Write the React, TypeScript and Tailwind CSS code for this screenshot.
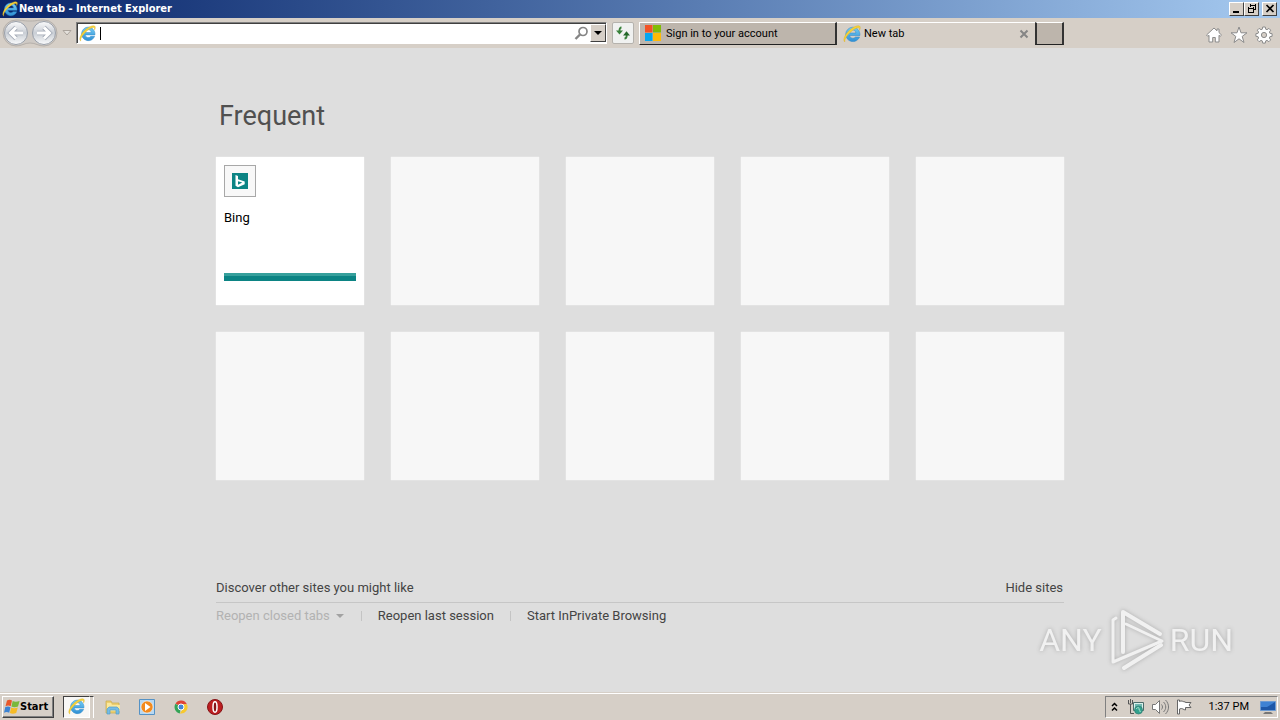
import { useState } from 'react';
import type { ReactNode } from 'react';

const bevel =
  'border border-t-white border-l-white border-r-[#404040] border-b-[#404040]';

function IeIcon({ className }: { className: string }) {
  return (
    <svg viewBox="0 0 18 18" className={className} aria-hidden="true">
      <defs>
        <linearGradient id="ie-blue" x1="0" y1="0" x2="0" y2="1">
          <stop offset="0" stopColor="#74cdf5" />
          <stop offset="1" stopColor="#2f8fd4" />
        </linearGradient>
      </defs>
      <path
        d="M9.600 2.200a7.200 7.200 0 1 0 7 9.800h-4.100a3.400 3.400 0 0 1-6-1.500h10.400c.4-4.700-3-8.300-7.300-8.300ZM6.500 8a3.200 3.200 0 0 1 6.400 0Z"
        fill="url(#ie-blue)"
        stroke="#2a86c8"
        strokeWidth=".5"
      />
      <path
        d="M2 17C-.9 15.500 2.100 9 7 4.800 11.500 1 16.300-.3 17.100 1.800c.4 1 0 2.300-.6 3.400.2-1.800-.2-2.500-1.300-2.500-2 0-5.400 2.100-8.300 5C3.100 11.300 1 15.500 2 17Z"
        fill="#f5d33a"
        stroke="#dcae20"
        strokeWidth=".4"
      />
    </svg>
  );
}

function WindowsFlag({ className }: { className: string }) {
  return (
    <svg viewBox="0 0 16 16" className={className} aria-hidden="true">
      <path d="M3 1.500C5 .4 6.600.700 8 1.600L6.700 7.300C5.200 6.400 3.500 6.300 1.500 7.200Z" fill="#e8582a" />
      <path d="M8.700 2c1.800.9 4 1 6.900 0l-1.600 5.600c-2.400.9-4.700.9-6.600 0Z" fill="#79b83b" />
      <path d="M1.300 8.100c2-.9 3.700-.8 5.200.1l-1.300 5.600c-1.500-.9-3.300-1-5.200-.1Z" fill="#3c83d3" />
      <path d="M7.200 8.500c1.900.9 4.200.9 6.600 0l-1.600 5.600c-2.300.9-4.500.9-6.300 0Z" fill="#f6bb26" />
    </svg>
  );
}

function CaptionButton({ label, children }: { label: string; children: ReactNode }) {
  return (
    <button aria-label={label} className={`flex h-[14px] w-[15px] items-center justify-center bg-[#d6cfc7] ${bevel}`}>
      <svg viewBox="0 0 12 12" className="size-3" fill="none" stroke="#000" shapeRendering="crispEdges" aria-hidden="true">
        {children}
      </svg>
    </button>
  );
}

function TitleBar() {
  return (
    <header className="flex h-[18px] items-center bg-linear-to-r from-[#0a246a] to-[#a6caf0] pr-[3px] pl-[2px]">
      <IeIcon className="size-4" />
      <h1 className="ml-px flex-1 font-[DejaVu_Sans_Condensed,sans-serif] text-[11px] leading-4 font-bold text-white">
        New tab - Internet Explorer
      </h1>
      <CaptionButton label="Minimize">
        <path d="M2 9h6" strokeWidth="2" />
      </CaptionButton>
      <CaptionButton label="Restore">
        <path d="M4 2h6M4.500 1v3M9.500 1v6M8 6.500h2M2 5h6M2.500 4v6M7.500 4v6M2 9.500h6" />
      </CaptionButton>
      <span className="w-[3px]" />
      <CaptionButton label="Close">
        <path d="m2.500 2 7 7m0-7-7 7" strokeWidth="1.700" shapeRendering="auto" />
      </CaptionButton>
    </header>
  );
}

function NavButtons() {
  return (
    <div className="flex items-center">
      <svg viewBox="0 0 56 28" className="h-7 w-14" aria-hidden="true">
        <defs>
          <linearGradient id="nav-fill" x1="0" y1="0" x2="0" y2="1">
            <stop offset="0" stopColor="#fbfbfc" />
            <stop offset=".5" stopColor="#c9ced5" />
            <stop offset="1" stopColor="#fafbfc" />
          </linearGradient>
        </defs>
        <path d="M14 1c6 0 7 1 14 1s8-1 14-1a13 13 0 0 1 0 26c-6 0-8-3-14-3s-8 3-14 3a13 13 0 0 1 0-26Z" fill="#cfcac5" stroke="#b5b0ab" />
        <circle cx="14" cy="14" r="11.500" fill="url(#nav-fill)" stroke="#9aa0aa" />
        <circle cx="42" cy="14" r="11.500" fill="url(#nav-fill)" stroke="#9aa0aa" />
        <path d="M21 14H8.500m5.500-5.500L8.500 14l5.500 5.500" fill="none" stroke="#a4abb7" strokeWidth="4.600" />
        <path d="M21 14H8.500m5.500-5.500L8.500 14l5.500 5.500" fill="none" stroke="#fff" strokeWidth="3" />
        <path d="M35 14h12.500M42 8.500l5.500 5.500-5.500 5.500" fill="none" stroke="#a4abb7" strokeWidth="4.600" />
        <path d="M35 14h12.500M42 8.500l5.500 5.500-5.500 5.500" fill="none" stroke="#fff" strokeWidth="3" />
      </svg>
      <button aria-label="Recent pages" className="flex w-[18px] justify-center">
        <svg viewBox="0 0 10 6" className="h-[6px] w-[10px]" aria-hidden="true">
          <path d="M1 .5h8L5 5Z" fill="#e5e1dc" stroke="#aaa39c" />
        </svg>
      </button>
    </div>
  );
}

function Toolbar() {
  const [address, setAddress] = useState('');
  return (
    <nav className="flex h-[30px] items-center bg-[#d6cfc7] pr-[7px] pl-[2px]">
      <NavButtons />
      <div className="flex h-[22px] min-w-0 flex-1 items-center border border-t-[#808080] border-r-white border-b-white border-l-[#808080] bg-white shadow-[inset_1px_1px_0_#404040]">
        <IeIcon className="ml-[2px] size-[17px] shrink-0" />
        <span className="ml-1 h-[13px] w-px bg-black" />
        <input
          aria-label="Address"
          value={address}
          onChange={(e) => setAddress(e.target.value)}
          className="min-w-0 flex-1 bg-transparent text-[11px] outline-none"
        />
        <button aria-label="Search" className="mr-px">
          <svg viewBox="0 0 16 16" className="size-4" fill="none" stroke="#858585" aria-hidden="true">
            <circle cx="10" cy="6.500" r="4" strokeWidth="1.700" />
            <path d="m7 9.500-4.500 4.500" strokeWidth="2.400" />
          </svg>
        </button>
        <button aria-label="Show address history" className={`flex h-[18px] w-4 items-center justify-center bg-[#d6cfc7] ${bevel}`}>
          <svg viewBox="0 0 8 4" className="h-1 w-2" aria-hidden="true">
            <path d="M0 0h8L4 4Z" />
          </svg>
        </button>
      </div>
      <button aria-label="Refresh" className="mx-[5px] flex size-[22px] items-center justify-center rounded-xs border border-[#b5b2ad] bg-[#f0f1f0]">
        <svg viewBox="0 0 16 16" className="size-4" fill="none" stroke="#38813a" strokeWidth="1.800" aria-hidden="true">
          <path d="M6.500 2.500C5 2.500 4.500 4 4.500 5.500V7" />
          <path d="M1 5.500h7L4.500 9.500Z" fill="#38813a" stroke="none" />
          <path d="M9.500 13.500c1.700 0 2.200-1.500 2.200-3V9" />
          <path d="M8 10.500h7l-3.500-4.200Z" fill="#25672a" stroke="none" />
        </svg>
      </button>
      <button className="flex h-[23px] w-[198px] items-center border-t border-r-2 border-b border-l border-t-white border-r-[#333] border-b-[#222] border-l-white bg-[#bdb5ac] pl-[5px] text-[11px]">
        <svg viewBox="0 0 16 16" className="mr-[5px] size-4" aria-hidden="true">
          <path d="M0 0h7.500v7.500H0Z" fill="#f35325" />
          <path d="M8 0h8v7.500H8Z" fill="#81bc06" />
          <path d="M0 8h7.500v8H0Z" fill="#05a6f0" />
          <path d="M8 8h8v8H8Z" fill="#ffba08" />
        </svg>
        <span className="pt-[2px]">Sign in to your account</span>
      </button>
      <div className="flex h-[23px] w-[198px] items-center border-t border-t-white pr-[6px] pl-[6px] text-[11px]">
        <button className="flex flex-1 items-center">
          <IeIcon className="mr-[3px] size-[18px]" />
          <span className="pt-[2px]">New tab</span>
        </button>
        <button aria-label="Close tab">
          <svg viewBox="0 0 10 10" className="size-[10px]" stroke="#858585" strokeWidth="2" aria-hidden="true">
            <path d="m1.500 1.500 7 7m0-7-7 7" />
          </svg>
        </button>
      </div>
      <button aria-label="New tab" className="h-[23px] w-[29px] border-x-2 border-t border-b border-x-[#333] border-t-white border-b-[#222] bg-[#bdb5ac]" />
      <div className="ml-[141px] flex items-center gap-[7px] pt-[3px]">
        <button aria-label="Home">
          <svg viewBox="0 0 18 18" className="size-[18px]" fill="#fff" stroke="#8b8b8b" aria-hidden="true">
            <path d="M9 2 1.500 9l1.300 1.300 1.200-1V16h3.700v-4.500h2.600V16H14V9.300l1.200 1L16.500 9 14 6.600V3h-2v1.800Z" />
          </svg>
        </button>
        <button aria-label="Favorites">
          <svg viewBox="0 0 18 18" className="size-[18px]" fill="#fff" stroke="#8b8b8b" aria-hidden="true">
            <path d="m9 1 2 5.800h6l-4.800 3.600L14 16.500l-5-3.700-5 3.700 1.800-6.100L1 6.800h6Z" />
          </svg>
        </button>
        <button aria-label="Tools">
          <svg viewBox="0 0 18 18" className="size-[18px]" fill="#fff" stroke="#8b8b8b" aria-hidden="true">
            <path d="M7.700 1h2.600l.4 2.200 1.300.5 1.900-1.300 1.800 1.800L14.400 6l.5 1.300 2.200.4v2.600l-2.200.4-.5 1.300 1.300 1.900-1.800 1.800-1.900-1.300-1.300.5-.4 2.200H7.700l-.4-2.200-1.300-.5-1.900 1.300-1.800-1.800L3.600 12l-.5-1.300-2.200-.4V7.700l2.200-.4L3.600 6 2.300 4.200l1.800-1.800L6 3.700l1.300-.5Z" />
            <circle cx="9" cy="9" r="2.600" fill="#d6cfc7" />
          </svg>
        </button>
      </div>
    </nav>
  );
}

function BingTile() {
  return (
    <a href="#bing" className="flex h-[148px] flex-col bg-white p-2 text-black shadow-[0_0_1px_#fff]">
      <span className="flex size-8 items-center justify-center border border-[#a8a8a8] bg-[#f8f8f8]">
        <svg viewBox="0 0 16 16" className="size-4" aria-hidden="true">
          <path d="M0 0h16v16H0Z" fill="#0c8484" />
          <path d="m3.500 2 2.500.9v3.300l6.700 2.200v2.800L6 14.200l-2.500-1.500Z" fill="#fff" />
          <path d="m6 8.200 4.300 1.400L6 11.800Z" fill="#0c8484" />
        </svg>
      </span>
      <span className="mt-3 text-[13px] leading-[18px]">Bing</span>
      <span className="mt-[46px] h-2 border-t-[3px] border-[#36a09c] bg-[#0c8484]" />
    </a>
  );
}

function Watermark() {
  return (
    <div className="absolute right-[47px] bottom-[20px] flex items-center gap-[5px] text-[32px] leading-[64px] text-[#f1f1f1] drop-shadow-[0_0_2px_#aaa]">
      <span>ANY</span>
      <svg viewBox="0 0 58 64" className="h-16 w-[58px]" fill="none" stroke="#f1f1f1" strokeLinejoin="round" strokeLinecap="round" aria-hidden="true">
        <path d="M16 44V4l37 22" strokeWidth="4" />
        <path d="M9 10 6 12v42l49-21-36-17" strokeWidth="3" />
        <path d="m17 60 37-23" strokeWidth="4" />
      </svg>
      <span>RUN</span>
    </div>
  );
}

function NewTabPage() {
  return (
    <main className="relative flex-1 bg-[#dedede] px-6 pt-12 text-[13px] leading-[18px] text-[#444]">
      <div className="mx-auto max-w-[848px]">
        <h2 className="pl-[3px] text-[27px] leading-10 text-[#505050]">Frequent</h2>
        <section aria-label="Frequent sites" className="mt-[21px] grid grid-cols-5 gap-[27px]">
          <BingTile />
          {Array.from({ length: 9 }, (_, i) => (
            <div key={i} className="h-[148px] bg-[#f7f7f7] shadow-[0_0_1px_#fff]" />
          ))}
        </section>
        <div className="mt-[99px] flex justify-between border-b border-[#c6c6c6] pb-[5px]">
          <a href="#discover">Discover other sites you might like</a>
          <a href="#hide" className="pr-px">Hide sites</a>
        </div>
        <div className="mt-1 flex items-center">
          <button disabled className="flex items-center gap-[6px] text-[#b2b2b2]">
            Reopen closed tabs
            <svg viewBox="0 0 8 4" className="h-1 w-2" fill="#a2a2a2" aria-hidden="true">
              <path d="M0 0h8L4 4Z" />
            </svg>
          </button>
          <span className="mr-4 ml-[17px] h-[10px] w-px bg-[#c4c4c4]" />
          <a href="#last-session">Reopen last session</a>
          <span className="mx-4 h-[10px] w-px bg-[#c4c4c4]" />
          <a href="#inprivate">Start InPrivate Browsing</a>
        </div>
      </div>
      <Watermark />
    </main>
  );
}

function Taskbar() {
  return (
    <footer className="flex h-7 items-center border-t border-[#d6cfc7] bg-[#d6cfc7] pr-[2px] pl-[2px] text-[11px] shadow-[inset_0_1px_0_#fff]">
      <button className={`flex h-[22px] w-[52px] items-center bg-[#d6cfc7] pl-px font-[DejaVu_Sans_Condensed,sans-serif] font-bold shadow-[inset_-1px_-1px_0_#808080] ${bevel}`}>
        <WindowsFlag className="size-4" />
        <span className="pt-[2px]">Start</span>
      </button>
      <div className="ml-[9px] flex items-center">
        <button aria-label="Internet Explorer" className="flex h-[22px] w-[27px] items-center justify-center border border-t-[#404040] border-r-white border-b-white border-l-[#404040] bg-[#f8f7f5]">
          <IeIcon className="size-[17px]" />
        </button>
        <span className="h-[22px] w-1 border-t border-r border-t-[#404040] border-r-white bg-[#d6cfc7]" />
        <button aria-label="Windows Explorer" className="ml-[10px]">
          <svg viewBox="0 0 18 18" className="size-[18px]" aria-hidden="true">
            <path d="M2 3h5l1 2h7v10H2Z" fill="#edcf70" stroke="#c8a94b" strokeWidth=".7" />
            <path d="M3 5h4l1 2h8v6H3Z" fill="#fae89d" />
            <path d="M3 16v-5l2-2h8l2 2v5h-3v-4H6v4Z" fill="#75bce5" stroke="#529dca" strokeWidth=".7" />
          </svg>
        </button>
        <button aria-label="Windows Media Player" className="ml-4">
          <svg viewBox="0 0 18 18" className="size-[18px]" aria-hidden="true">
            <path d="M1.500 1.500h15v15h-15Z" fill="#b7d8f2" stroke="#5592c5" />
            <circle cx="9" cy="9" r="6" fill="#f28a1e" stroke="#fff" strokeWidth=".5" />
            <path d="m7 5 5.500 4L7 13Z" fill="#fff" />
          </svg>
        </button>
        <button aria-label="Chrome" className="ml-4">
          <svg viewBox="0 0 18 18" className="size-[18px]" aria-hidden="true">
            <path d="M9 9 3.500 5.500A6.500 6.500 0 0 1 14.900 6.200H9Z" fill="#df4335" />
            <path d="M3.400 5.700 9 9l-1.200 6.400A6.500 6.500 0 0 1 3.400 5.700Z" fill="#34a457" />
            <path d="M9 6.200h5.900A6.500 6.500 0 0 1 7.800 15.400L11.500 10Z" fill="#f7c92e" />
            <circle cx="9" cy="9" r="3" fill="#4285d5" stroke="#fff" />
          </svg>
        </button>
        <button aria-label="Opera" className="ml-4">
          <svg viewBox="0 0 18 18" className="size-[18px]" aria-hidden="true">
            <circle cx="9" cy="9" r="7.500" fill="#bd1e20" stroke="#861316" />
            <ellipse cx="9" cy="9" rx="2" ry="5.200" fill="#861316" stroke="#fff" strokeWidth="1.500" />
          </svg>
        </button>
      </div>
      <div className="ml-auto flex h-[22px] items-center border border-t-[#808080] border-r-white border-b-white border-l-[#808080] pl-[5px]">
        <button aria-label="Show hidden icons">
          <svg viewBox="0 0 7 10" className="h-[10px] w-[7px]" fill="none" stroke="#000" strokeWidth="1.500" aria-hidden="true">
            <path d="m1 4 2.500-2.500L6 4M1 8.500 3.500 6 6 8.500" />
          </svg>
        </button>
        <svg viewBox="0 0 18 18" className="ml-[9px] size-[18px]" aria-hidden="true">
          <path d="M6.500 4.500h10v8h-10Z" fill="#daf0eb" stroke="#4c6c6a" />
          <path d="M8 6h7v5H8Z" fill="#70b8b0" />
          <circle cx="11.500" cy="12" r="4" fill="#31a28e" stroke="#337b71" strokeWidth=".7" />
          <path d="M9 11c2-2 3-2 3 0s2 1 1 3" stroke="#b8e4d5" fill="none" />
          <path d="M1.500 2v4h4V2M3.500 1v4m0 1v9.500H7" stroke="#555" fill="none" />
        </svg>
        <svg viewBox="0 0 18 18" className="ml-[6px] size-[18px]" fill="none" stroke="#777" aria-hidden="true">
          <path d="M1.500 6.500h3l4-4v13l-4-4h-3Z" fill="#fff" />
          <path d="M10.500 6.500c1.300 1.500 1.300 3.500 0 5m2-7.500c3 3 3 7 0 10m2-12c4 4 4 10 0 14" />
        </svg>
        <svg viewBox="0 0 18 18" className="ml-[6px] size-[18px]" fill="#fff" stroke="#666" aria-hidden="true">
          <path d="M2.500 2v14h2v-5c3-1.500 4 1 6 1V9.500h5.500L14 7l2-2.500h-5.500V4c-2.500 0-4-2-6-.5V2Z" />
        </svg>
        <time className="ml-4 pt-[2px] whitespace-nowrap">1:37 PM</time>
        <button aria-label="Show desktop" className="ml-[10px]">
          <svg viewBox="0 0 18 18" className="size-[18px]" aria-hidden="true">
            <path d="M1.500 3.500h15v9h-15Z" fill="#1e58a8" stroke="#6d9bd2" />
            <path d="M2 4h14L8 9H2Z" fill="#3e82d3" />
            <path d="M6 14h6l2 2H4Z" fill="#777" />
          </svg>
        </button>
      </div>
    </footer>
  );
}

export default function App() {
  return (
    <div className="flex min-h-screen flex-col font-[Roboto,sans-serif] text-black">
      <TitleBar />
      <Toolbar />
      <NewTabPage />
      <Taskbar />
    </div>
  );
}
